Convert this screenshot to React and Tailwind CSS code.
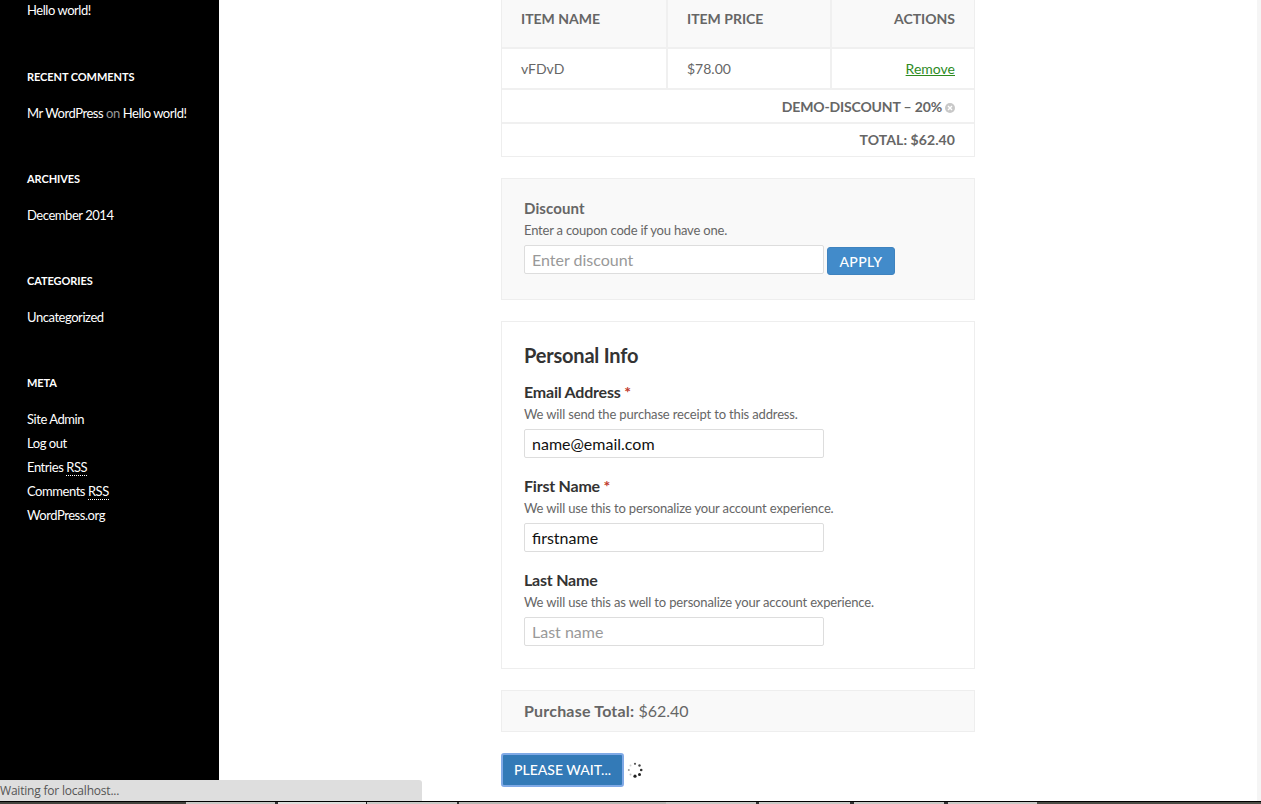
import { useState } from "react";

const sidebarWidgets = [
  { title: "RECENT COMMENTS", items: [<>Mr WordPress <span className="text-[#999]">on</span> Hello world!</>] },
  { title: "ARCHIVES", items: ["December 2014"] },
  { title: "CATEGORIES", items: ["Uncategorized"] },
  {
    title: "META",
    items: [
      "Site Admin",
      "Log out",
      <>Entries <span className="border-b border-dotted border-white">RSS</span></>,
      <>Comments <span className="border-b border-dotted border-white">RSS</span></>,
      "WordPress.org",
    ],
  },
];

const taskbarSegments = [
  { width: "w-[186px]", color: "bg-[#44453f]" },
  { width: "w-[89px]", color: "bg-[#c9c9c6]" },
  { width: "w-[3px]", color: "bg-[#333333]" },
  { width: "w-[88px]", color: "bg-[#dddddb]" },
  { width: "w-px", color: "bg-[#222222]" },
  { width: "w-[90px]", color: "bg-[#c9c9c6]" },
  { width: "w-[2px]", color: "bg-[#333333]" },
  { width: "w-[207px]", color: "bg-[#b8b8b4]" },
  { width: "w-[90px]", color: "bg-[#c9c9c6]" },
  { width: "w-[3px]", color: "bg-[#333333]" },
  { width: "w-[91px]", color: "bg-[#c9c9c6]" },
  { width: "w-[4px]", color: "bg-[#333333]" },
  { width: "w-[90px]", color: "bg-[#c9c9c6]" },
  { width: "w-[4px]", color: "bg-[#333333]" },
  { width: "w-[89px]", color: "bg-[#c9c9c6]" },
  { width: "flex-1", color: "bg-[#4c4d46]" },
];

const Sidebar = () => (
  <aside className="w-[219px] shrink-0 bg-black pl-[27px] text-[13px] leading-[24px] tracking-[-0.45px] text-white">
    <div className="-mt-[2px] h-[25px]">Hello world!</div>
    {sidebarWidgets.map((widget) => (
      <div key={widget.title} className="mt-[42px]">
        <h3 className="mb-[12px] text-[11px] font-bold leading-[24px] tracking-[-0.07px]">{widget.title}</h3>
        {widget.items.map((item, i) => (
          <div key={i}>{item}</div>
        ))}
      </div>
    ))}
  </aside>
);

const CartTable = () => (
  <div className="border-x border-b border-[#eeeeee] text-[14px] text-[#666666]">
    <div className="flex h-[49px] border-b-2 border-[#f0f0f0] bg-[#f9f9f9] font-bold">
      <div className="flex w-[166px] items-center border-r-2 border-[#f0f0f0] pb-[10px] pl-[19px]">ITEM NAME</div>
      <div className="flex w-[164px] items-center border-r-2 border-[#f0f0f0] pb-[10px] pl-[19px]">ITEM PRICE</div>
      <div className="flex flex-1 items-center justify-end pb-[10px] pr-[19px]">ACTIONS</div>
    </div>
    <div className="flex h-[41px] border-b-2 border-[#f0f0f0]">
      <div className="flex w-[166px] items-center border-r-2 border-[#f0f0f0] pl-[19px]">vFDvD</div>
      <div className="flex w-[164px] items-center border-r-2 border-[#f0f0f0] pl-[19px]">$78.00</div>
      <div className="flex flex-1 items-center justify-end pr-[19px]">
        <a className="text-[#2e8b1f] underline">Remove</a>
      </div>
    </div>
    <div className="flex h-[34px] items-center justify-end border-b-2 border-[#f0f0f0] pr-[19px] font-bold tracking-[-0.15px]">
      DEMO-DISCOUNT – 20%
      <svg className="ml-[3px] mt-[3px]" width="10" height="10" viewBox="0 0 10 10">
        <circle cx="5" cy="5" r="5" fill="#c8c8c8" />
        <path d="M3 3l4 4M7 3l-4 4" stroke="#fff" strokeWidth="1.4" />
      </svg>
    </div>
    <div className="flex h-[32px] items-center justify-end pb-[2px] pr-[19px] font-bold tracking-[0.08px]">TOTAL: $62.40</div>
  </div>
);

const TextInput = ({ placeholder, value }) => (
  <input
    type="text"
    defaultValue={value}
    placeholder={placeholder}
    className="block h-[29px] w-[300px] rounded-[2px] border border-[#dddddd] bg-white px-[7px] text-[16px] text-[#111111] placeholder:text-[#999999]"
  />
);

const Field = ({ label, required, hint, placeholder, value }) => (
  <div className="mb-[16px]">
    <div className="text-[16px] font-bold leading-[24px] tracking-[-0.22px] text-[#333333]">
      {label}
      {required && <span className="text-[#c0392b]"> *</span>}
    </div>
    <div className="mb-[5px] mt-[1px] text-[13px] leading-[19px] tracking-[-0.15px] text-[#666666]">{hint}</div>
    <TextInput placeholder={placeholder} value={value} />
  </div>
);

const Spinner = () => (
  <svg width="16" height="16" viewBox="0 0 16 16">
    <circle cx="8" cy="1.8" r="1.1" fill="#555" />
    <circle cx="12.5" cy="3.5" r="1.2" fill="#444" />
    <circle cx="14.2" cy="8" r="1.3" fill="#333" />
    <circle cx="12.5" cy="12.5" r="1.5" fill="#222" />
    <circle cx="8" cy="14.2" r="1.6" fill="#222" />
    <circle cx="3.5" cy="12.5" r="1" fill="#bbb" />
    <circle cx="1.8" cy="8" r="1" fill="#999" />
    <circle cx="3.5" cy="3.5" r="1" fill="#ccc" />
  </svg>
);

export default function App() {
  const [submitting] = useState(true);

  return (
    <div className="relative flex h-[804px] flex-col overflow-hidden bg-white font-[Lato,sans-serif]">
      <div className="flex min-h-0 flex-1">
        <Sidebar />

        <main className="min-w-0 flex-1 pl-[282px]">
          <div className="w-[474px]">
            <CartTable />

            <section className="mt-[21px] h-[122px] border border-[#eeeeee] bg-[#f9f9f9] px-[22px] pt-[19px]">
              <div className="text-[15px] font-bold leading-[20px] tracking-[0.1px] text-[#666666]">Discount</div>
              <div className="mt-[2px] text-[13px] leading-[20px] tracking-[-0.2px] text-[#666666]">Enter a coupon code if you have one.</div>
              <div className="mt-[5px] flex gap-[3px]">
                <TextInput placeholder="Enter discount" />
                <button className="mt-[2px] h-[28px] w-[68px] rounded-[3px] border border-[#3f83bf] bg-[#428bca] text-[14px] font-medium tracking-[0.4px] text-white">
                  APPLY
                </button>
              </div>
            </section>

            <section className="mt-[21px] h-[348px] border border-[#eeeeee] bg-white px-[22px] pt-[20px]">
              <h2 className="mb-[12px] text-[20px] font-bold leading-[26px] tracking-[-0.2px] text-[#333333]">Personal Info</h2>
              <Field label="Email Address" required hint="We will send the purchase receipt to this address." value="name@email.com" />
              <Field label="First Name" required hint="We will use this to personalize your account experience." value="firstname" />
              <Field label="Last Name" hint="We will use this as well to personalize your account experience." placeholder="Last name" />
            </section>

            <section className="mt-[21px] flex h-[42px] items-center border border-[#eeeeee] bg-[#f9f9f9] px-[22px] text-[16px] text-[#666666]">
              <span className="font-bold tracking-[0.2px]">Purchase Total:</span>&nbsp;<span>$62.40</span>
            </section>

            <div className="mt-[21px] flex items-center gap-[3px]">
              <button className="h-[34px] w-[123px] rounded-[3px] border-2 border-[#7fa9e6] bg-[#337ab7] pb-[2px] text-[14px] font-medium text-white">
                {submitting ? "PLEASE WAIT..." : "PURCHASE"}
              </button>
              <Spinner />
            </div>
          </div>
        </main>

        <div className="w-[4px] shrink-0 bg-[#f5f5f5]" />
      </div>

      <div className="h-px shrink-0 bg-black" />
      <div className="flex h-[2px] shrink-0">
        {taskbarSegments.map((segment, i) => (
          <div key={i} className={`${segment.width} ${segment.color}`} />
        ))}
      </div>

      {/* browser status bubble */}
      <div className="absolute bottom-[3px] left-0 flex h-[21px] w-[422px] items-center rounded-tr-[3px] bg-[#dedede] text-[12px] tracking-[-0.2px] text-[#555555]">
        <span className="font-['Open_Sans',sans-serif]">Waiting for localhost...</span>
      </div>
    </div>
  );
}
